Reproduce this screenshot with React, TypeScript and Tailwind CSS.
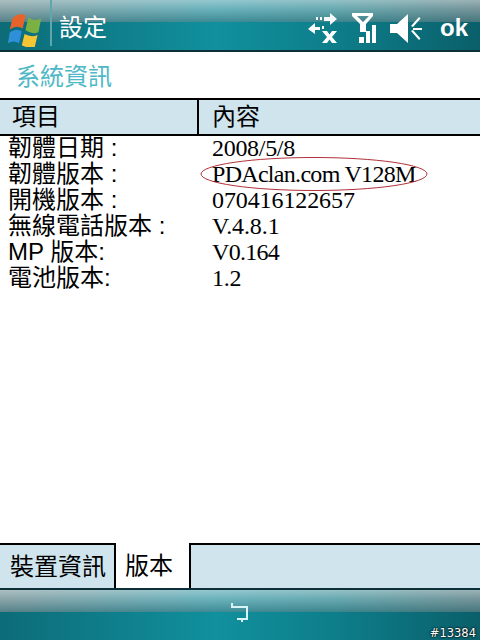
const cjk = "font-['Liberation_Sans','Noto_Sans_CJK_TC',sans-serif]";
const rows: [string, string, string][] = [
  ["韌體日期 :", "2008/5/8", "tracking-[-0.3px]"],
  ["韌體版本 :", "PDAclan.com V128M", "tracking-[-0.7px]"],
  ["開機版本 :", "070416122657", "tracking-[-0.1px]"],
  ["無線電話版本 :", "V.4.8.1", "tracking-[-0.1px]"],
  ["MP 版本:", "V0.164", "tracking-[-0.7px]"],
  ["電池版本:", "1.2", "tracking-[-0.2px]"],
];

function Bar({ className = "", children }: { className?: string; children?: React.ReactNode }) {
  return (
    <div className={`relative bg-[linear-gradient(90deg,#0c6c78_0%,#11909d_45%,#0d7e8a_70%,#0a5f6a_100%)] ${className}`}>
      <div className="absolute inset-x-0 top-0 h-[44%] bg-[linear-gradient(90deg,#7f9ca0_0%,#5aaab5_45%,#58a0a8_70%,#66898e_100%)]" />
      <div className="absolute inset-x-0 top-0 h-[44%] bg-[linear-gradient(180deg,rgba(255,255,255,0.35)_0%,rgba(255,255,255,0.1)_40%,rgba(10,80,90,0.35)_100%)]" />
      <div className="relative h-full">{children}</div>
    </div>
  );
}

function Flag() {
  return (
    <svg width="37" height="37" viewBox="0 0 38 40" className="shrink-0">
      <path d="M5 9 Q12 2 19 6 L16 20 Q9 16 2 21 Z" fill="#e8622c" />
      <path d="M22 8 Q29 13 36 9 L33 24 Q26 27 19 22 Z" fill="#7bb043" />
      <path d="M2 24 Q9 19 15 23 L12 36 Q6 32 0 36 Z" fill="#2f8fd8" />
      <path d="M18 26 Q25 30 32 27 L29 40 Q22 42 15 38 Z" fill="#f4c634" />
    </svg>
  );
}

function StatusIcons() {
  return (
    <div className="flex items-center gap-[12px]">
      <svg width="32" height="30" viewBox="0 0 32 30" fill="#fff">
        <path d="M8 4h2v3H8zM12 4h2v3h-2zM16 4h6V0l7 6-7 6V8h-6z" opacity="0.95" />
        <path d="M0 16l7-6v4h5v3H7v4zM14 13h2v3h-2z" />
        <path d="M14 18h5l2.500 3.500L24 18h5l-5 6 5 6h-5l-2.500-3.500L19 30h-5l5-6z" />
      </svg>
      <svg width="26" height="32" viewBox="0 0 26 32" fill="#fff">
        <path d="M0 1h21v3l-7 8v8H8v-8L0 4zM5 4l6 6 6-6z" fillRule="evenodd" />
        <path d="M7 25h5v6H7zM14 19h4v12h-4zM20 13h4v18h-4z" />
      </svg>
      <svg width="32" height="29" viewBox="0 0 32 29" fill="#fff">
        <path d="M0 10h7L18 0v29L7 19H0z" />
        <path d="M21 12l8-9 1.500 1.500L23 13zM23 14h9v2h-9zM23 16l7.500 8.500L29 26l-8-9z" />
      </svg>
    </div>
  );
}

export default function App() {
  return (
    <div className={`relative w-[480px] h-[640px] flex flex-col bg-white overflow-hidden ${cjk}`}>
      <Bar className="h-[50px] shrink-0">
        <div className="h-full flex items-center pl-[7px] pr-[12px]">
          <div className="pt-[6px]"><Flag /></div>
          <div className="ml-[6px] w-[2px] h-[46px] self-start bg-[#5fa7af]" />
          <span className="ml-[7px] pt-[6px] text-[24px] leading-none text-white">設定</span>
          <div className="ml-auto flex items-center gap-[18px] pt-[6px]">
            <StatusIcons />
            <span className="text-[24px] leading-none font-bold text-white font-['Liberation_Sans',sans-serif]">ok</span>
          </div>
        </div>
      </Bar>
      <div className="h-[2px] shrink-0 bg-[#0d3038]" />

      <div className="h-[46px] shrink-0 flex items-center pl-[16px] pt-[4px] text-[24px] leading-none text-[#4fb8c6]">系統資訊</div>

      <div className="h-[38px] shrink-0 flex bg-[#cfe4ec] border-y-2 border-black text-[24px] leading-none text-black">
        <div className="w-[199px] flex items-center pl-[12px] border-r-2 border-black">項目</div>
        <div className="flex items-center pl-[13px]">內容</div>
      </div>

      <div className="relative flex-1 flex flex-col text-[24px] text-black -mt-[1px]">
        {rows.map(([k, v, t]) => (
          <div key={k} className="h-[26px] flex items-center">
            <div className="w-[212px] shrink-0 pl-[8px] leading-none whitespace-pre">{k}</div>
            <div className={`leading-none font-['Liberation_Serif','Noto_Sans_CJK_TC',serif] ${t}`}>{v}</div>
          </div>
        ))}
        <svg width="232" height="38" viewBox="0 0 232 38" className="absolute left-[198px] top-[20px]">
          <ellipse cx="116" cy="19" rx="113" ry="16.500" fill="none" stroke="#b0303a" strokeWidth="1" />
        </svg>
      </div>

      <div className="h-[45px] shrink-0 flex bg-[#cfe4ec] text-[24px] leading-none text-black">
        <div className="w-[116px] border-t-2 border-r-2 border-black flex items-center pl-[10px]">裝置資訊</div>
        <div className="w-[75px] bg-white border-r-2 border-black flex items-center pl-[9px]">版本</div>
        <div className="flex-1 border-t-2 border-black" />
      </div>
      <div className="h-[2px] shrink-0 bg-[#0d3038]" />

      <Bar className="h-[50px] shrink-0">
        <div className="h-full flex justify-center pt-[12px]">
          <svg width="18" height="20" viewBox="0 0 18 20" fill="none" stroke="#d8f4f6" strokeWidth="2">
            <path d="M1 1v4h15v12H6M12 19h-2" />
          </svg>
        </div>
        <span className="absolute right-[4px] bottom-[1px] text-[11.500px] leading-none text-white font-['DejaVu_Sans',sans-serif] [text-shadow:0_0_2px_#000,0_0_2px_#000]">#13384</span>
      </Bar>
    </div>
  );
}
